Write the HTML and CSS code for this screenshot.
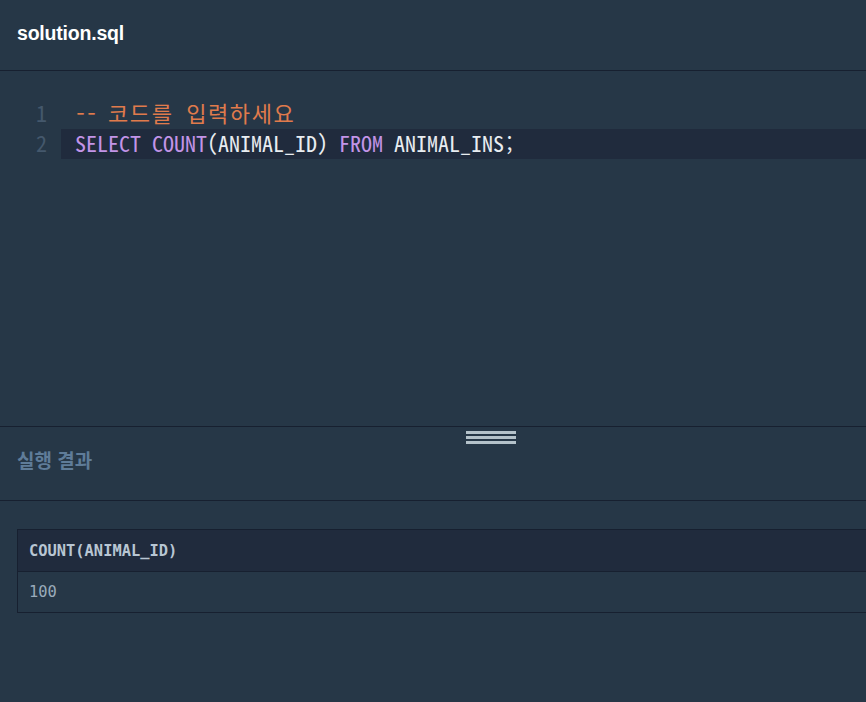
FILE: index.html
```html
<!DOCTYPE html>
<html lang="ko">
<head>
    <meta charset="UTF-8">
    <meta name="viewport" content="width=device-width, initial-scale=1.0">
    <title>solution.sql</title>
    <link rel="stylesheet" href="styles.css">
</head>
<body>
    <div class="file-bar">
        <h2 class="file-name">solution.sql</h2>
    </div>

    <div class="editor">
        <div class="code-line">
            <span class="line-no">1</span>
            <span class="line-text"><span class="tok-comment">-- <span class="hangul">코드를 입력하세요</span></span></span>
        </div>
        <div class="code-line active">
            <span class="line-no">2</span>
            <span class="line-text"><span class="tok-kw">SELECT</span> <span class="tok-kw">COUNT</span>(ANIMAL_ID) <span class="tok-kw">FROM</span> ANIMAL_INS;</span>
        </div>
    </div>

    <div class="result">
        <div class="resize-handle">
            <span></span><span></span><span></span>
        </div>
        <h3 class="result-title">실행 결과</h3>
        <div class="result-body">
            <table class="result-table">
                <thead>
                    <tr><th>COUNT(ANIMAL_ID)</th></tr>
                </thead>
                <tbody>
                    <tr><td>100</td></tr>
                </tbody>
            </table>
        </div>
    </div>
</body>
</html>
```

FILE: styles.css
```css
:root {
    --bg: #263747;
    --dark: #202b3d;
    --line: #172030;
    --white: #ffffff;
    --code: #e9edf1;
    --comment: #e07b4c;
    --keyword: #c394e8;
    --gutter: #44586c;
    --muted: #5f7c99;
}

html, body {
    overflow: hidden;
}

body {
    margin: 0;
    min-height: 100vh;
    background: var(--bg);
    font-family: 'Liberation Sans', Arial, 'Noto Sans CJK KR', sans-serif;
}

.file-bar {
    height: 71px;
    border-bottom: 1px solid var(--line);
    display: flex;
    align-items: center;
    padding: 0 17px 3px;
    box-sizing: border-box;
}

.file-name {
    margin: 0;
    color: var(--white);
    font-size: 19.5px;
    font-weight: 700;
    letter-spacing: -0.2px;
}

/* 코드 에디터 */
.editor {
    height: 355px;
    padding-top: 28px;
    box-sizing: border-box;
    font-family: 'Noto Sans Mono CJK KR', 'DejaVu Sans Mono', monospace;
    font-size: 22px;
}

.code-line {
    display: flex;
    height: 30px;
    line-height: 27px;
}

.line-no {
    width: 61px;
    padding-right: 14px;
    box-sizing: border-box;
    text-align: right;
    color: var(--gutter);
    flex-shrink: 0;
}

.line-text {
    flex: 1;
    padding-left: 14px;
    color: var(--code);
    white-space: pre;
    font-weight: 300;
}

.code-line.active .line-text {
    background: var(--dark);
}

.tok-comment { color: var(--comment); }
.tok-kw { color: var(--keyword); }
.hangul { letter-spacing: 1.6px; }

/* 실행 결과 */
.result {
    border-top: 1px solid var(--line);
    position: relative;
}

.resize-handle {
    position: absolute;
    top: 4px;
    left: 466px;
    width: 50px;
    display: flex;
    flex-direction: column;
    gap: 2px;
}

.resize-handle span {
    display: block;
    height: 3px;
    background: #b4c2ca;
}

.result-title {
    margin: 0;
    height: 74px;
    padding: 24px 17px 0;
    line-height: 21px;
    color: var(--muted);
    font-size: 19px;
    font-weight: 700;
    border-bottom: 1px solid var(--line);
    box-sizing: border-box;
}

.result-body {
    padding: 28px 0 0 17px;
}

.result-table {
    width: 900px;
    border-collapse: collapse;
    border: 1px solid var(--line);
    font-family: 'DejaVu Sans Mono', monospace;
    font-size: 15.4px;
    text-align: left;
}

.result-table th {
    background: var(--dark);
    color: #b8c6d3;
    font-weight: 700;
    height: 41px;
    padding: 0 11px;
    border-bottom: 1px solid var(--line);
}

.result-table td {
    color: #9aabbb;
    height: 40px;
    padding: 0 11px;
}
```
